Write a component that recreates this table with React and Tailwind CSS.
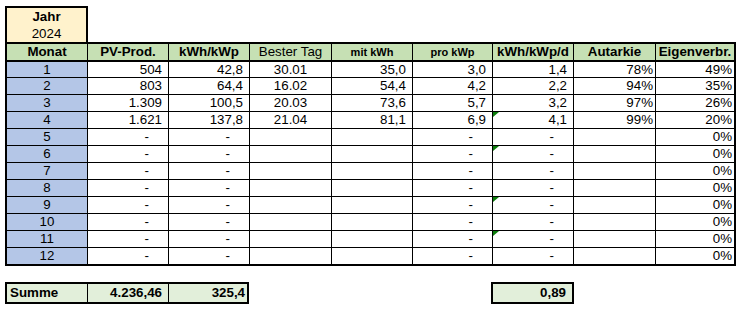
import React from "react";

const rows = [
  ["1", "504", "42,8", "30.01", "35,0", "3,0", "1,4", "78%", "49%"],
  ["2", "803", "64,4", "16.02", "54,4", "4,2", "2,2", "94%", "35%"],
  ["3", "1.309", "100,5", "20.03", "73,6", "5,7", "3,2", "97%", "26%"],
  ["4", "1.621", "137,8", "21.04", "81,1", "6,9", "4,1", "99%", "20%"],
  ["5", "-", "-", "", "", "-", "-", "", "0%"],
  ["6", "-", "-", "", "", "-", "-", "", "0%"],
  ["7", "-", "-", "", "", "-", "-", "", "0%"],
  ["8", "-", "-", "", "", "-", "-", "", "0%"],
  ["9", "-", "-", "", "", "-", "-", "", "0%"],
  ["10", "-", "-", "", "", "-", "-", "", "0%"],
  ["11", "-", "-", "", "", "-", "-", "", "0%"],
  ["12", "-", "-", "", "", "-", "-", "", "0%"],
];

const triangleRows = [3, 5, 8, 10];

function Tri() {
  return (
    <svg className="absolute left-0 top-0" width="6" height="5" viewBox="0 0 6 5">
      <polygon points="0,0 6,0 0,5" fill="#0b7d0b" />
    </svg>
  );
}

function Cell({ value, col, last, tri }) {
  let cls = "relative flex items-center h-full overflow-hidden whitespace-nowrap";
  if (!last) cls += " border-r border-black";
  if (col === 0) cls += " justify-center bg-[#B4C6E7]";
  else if (col === 3) cls += " justify-center";
  else if (value === "-") cls += " justify-end pr-[19px]";
  else if (col === 7 || col === 8) cls += " justify-end pr-[2px]";
  else cls += " justify-end pr-[6px]";
  return (
    <div className={cls}>
      {tri && <Tri />}
      <span>{value}</span>
    </div>
  );
}

const gridCols =
  "grid grid-cols-[81px_81px_81px_82px_81px_80px_81px_82px_78px]";

const headers = [
  { t: "Monat", c: "font-bold" },
  { t: "PV-Prod.", c: "font-bold" },
  { t: "kWh/kWp", c: "font-bold" },
  { t: "Bester Tag", c: "" },
  { t: "mit kWh", c: "font-bold text-[11px]" },
  { t: "pro kWp", c: "font-bold text-[11px]" },
  { t: "kWh/kWp/d", c: "font-bold" },
  { t: "Autarkie", c: "font-bold" },
  { t: "Eigenverbr.", c: "font-bold" },
];

export default function App() {
  return (
    <div className="w-[743px] h-[309px] bg-white text-black text-[13.33px] leading-none font-['Liberation_Sans',Arial,sans-serif] overflow-hidden">
      <div className="pl-[5px] pt-[6px]">
        {/* Jahr box */}
        <div className="w-[83px] border-2 border-b-0 border-black bg-[#FFF2CC]">
          <div className="h-[17px] flex items-center justify-center font-bold">Jahr</div>
          <div className="h-[17px] flex items-center justify-center">2024</div>
        </div>

        {/* Main table */}
        <div className="w-[731px] border-2 border-black">
          <div className={gridCols + " h-[18px] border-b-2 border-black bg-[#C6E0B4]"}>
            {headers.map((h, i) => (
              <div
                key={i}
                className={
                  "flex items-center justify-center h-full whitespace-nowrap " +
                  h.c +
                  (i < 8 ? " border-r border-black" : "")
                }
              >
                {h.t}
              </div>
            ))}
          </div>
          {rows.map((r, ri) => {
            let h = "h-[17px] border-b border-black";
            if (ri === 0) h = "h-[16px] border-b border-black";
            if (ri === 11) h = "h-[16px]";
            return (
              <div key={ri} className={gridCols + " " + h}>
                {r.map((v, ci) => (
                  <Cell
                    key={ci}
                    value={v}
                    col={ci}
                    last={ci === 8}
                    tri={ci === 6 && triangleRows.includes(ri)}
                  />
                ))}
              </div>
            );
          })}
        </div>

        {/* Sum row */}
        <div className="flex mt-[16px]">
          <div className="w-[244px] h-[22px] border-2 border-black bg-[#E2EFDA] font-bold grid grid-cols-[81px_81px_78px]">
            <div className="flex items-center pl-[3px] border-r border-black">Summe</div>
            <div className="flex items-center justify-end pr-[6px] border-r border-black">4.236,46</div>
            <div className="flex items-center justify-end pr-[2px]">325,4</div>
          </div>
          <div className="ml-[242px] w-[83px] h-[22px] border-2 border-black bg-[#E2EFDA] font-bold flex items-center justify-end pr-[6px]">
            0,89
          </div>
        </div>
      </div>
    </div>
  );
}
